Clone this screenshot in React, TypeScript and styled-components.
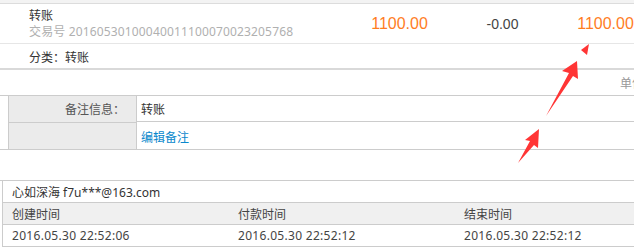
import React from "react";
import styled, { createGlobalStyle } from "styled-components";

const Global = createGlobalStyle`
  html, body { margin: 0; padding: 0; background: #fff; overflow: hidden; }
  body { font-family: "Noto Sans", "Noto Sans CJK SC", sans-serif; font-size: 12px; color: #333; }
`;

const Page = styled.div`
  position: relative;
  width: 680px;
  height: 248px;
`;

const TopBand = styled.div`
  height: 3px;
  background: #f3f3f3;
  border-bottom: 1px solid #dcdcdc;
`;

const ItemRow = styled.div`
  display: flex;
  align-items: center;
  height: 39px;
  border-bottom: 1px solid #e6e6e6;
`;

const ItemInfo = styled.div`
  flex: 1;
  padding-left: 29px;
  display: flex;
  flex-direction: column;
  align-self: flex-start;
  padding-top: 4px;
`;

const Title = styled.div`
  line-height: 16px;
  color: #333;
`;

const TradeNo = styled.div`
  line-height: 16px;
  color: #b0b0b0;
  letter-spacing: 0.15px;
`;

const Amount = styled.div<{ $orange?: boolean }>`
  width: 103px;
  text-align: center;
  font-family: "Liberation Sans", Arial, sans-serif;
  font-size: ${(p) => (p.$orange ? "16px" : "14px")};
  color: ${(p) => (p.$orange ? "#ff7d1f" : "#444")};
`;

const AmountEnd = styled.div`
  width: 23px;
`;

const CategoryRow = styled.div`
  height: 26px;
  display: flex;
  align-items: center;
  padding-left: 29px;
  padding-top: 2px;
  box-sizing: border-box;
  border-bottom: 2px solid #d9d9d9;
`;

const UnitRow = styled.div`
  height: 25px;
  display: flex;
  align-items: center;
  justify-content: flex-end;
  padding-right: 12px;
  color: #999;
  border-bottom: 1px solid #cccccc;
`;

const RemarkSection = styled.div`
  border-bottom: 1px solid #cccccc;
`;

const RemarkTable = styled.div`
  margin-left: 8px;
  border-left: 1px solid #cccccc;
  display: grid;
  grid-template-columns: 128px 1fr;
`;

const LabelCell = styled.div<{ $last?: boolean }>`
  height: 26px;
  background: #ebebeb;
  border-right: 1px solid #cccccc;
  border-bottom: ${(p) => (p.$last ? "none" : "1px solid #cccccc")};
  display: flex;
  align-items: center;
  justify-content: flex-end;
  padding-right: 11px;
  color: #555;
`;

const ValueCell = styled.div<{ $last?: boolean; $link?: boolean }>`
  height: 26px;
  border-bottom: ${(p) => (p.$last ? "none" : "1px solid #cccccc")};
  display: flex;
  align-items: center;
  padding-left: 4px;
  padding-top: 1px;
  box-sizing: border-box;
  color: ${(p) => (p.$link ? "#0a88cc" : "#333")};
`;

const Spacer = styled.div`
  height: 30px;
  border-bottom: 1px solid #cccccc;
`;

const BuyerBox = styled.div`
  margin-left: 2px;
  border-left: 1px solid #cccccc;
`;

const BuyerRow = styled.div`
  height: 21px;
  display: flex;
  align-items: center;
  padding-left: 9px;
  border-bottom: 1px solid #cccccc;
`;

const TimeGrid = styled.div<{ $head?: boolean }>`
  display: grid;
  grid-template-columns: 226px 226px 226px;
  height: 21px;
  background: ${(p) => (p.$head ? "#f0f0f0" : "#fff")};
  border-bottom: 1px solid #cccccc;
`;

const TimeCell = styled.div<{ $data?: boolean }>`
  display: flex;
  align-items: center;
  padding-left: 9px;
  color: #444;
  letter-spacing: ${(p) => (p.$data ? "0.3px" : "0")};
`;

const ArrowLayer = styled.svg`
  position: absolute;
  left: 0;
  top: 0;
  pointer-events: none;
`;

export default function App() {
  return (
    <>
      <Global />
      <Page>
        <TopBand />
        <ItemRow>
          <ItemInfo>
            <Title>转账</Title>
            <TradeNo>交易号 20160530100040011100070023205768</TradeNo>
          </ItemInfo>
          <Amount $orange>1100.00</Amount>
          <Amount>-0.00</Amount>
          <Amount $orange>1100.00</Amount>
          <AmountEnd />
        </ItemRow>
        <CategoryRow>分类：转账</CategoryRow>
        <UnitRow>单位：元</UnitRow>
        <RemarkSection>
          <RemarkTable>
            <LabelCell>备注信息：</LabelCell>
            <ValueCell>转账</ValueCell>
            <LabelCell $last />
            <ValueCell $last $link>编辑备注</ValueCell>
          </RemarkTable>
        </RemarkSection>
        <Spacer />
        <BuyerBox>
          <BuyerRow>心如深海 f7u***@163.com</BuyerRow>
          <TimeGrid $head>
            <TimeCell>创建时间</TimeCell>
            <TimeCell>付款时间</TimeCell>
            <TimeCell>结束时间</TimeCell>
          </TimeGrid>
          <TimeGrid>
            <TimeCell $data>2016.05.30 22:52:06</TimeCell>
            <TimeCell $data>2016.05.30 22:52:12</TimeCell>
            <TimeCell $data>2016.05.30 22:52:12</TimeCell>
          </TimeGrid>
        </BuyerBox>
        <ArrowLayer width="680" height="248" viewBox="0 0 680 248">
          <polygon points="589,44 581,50 587,55" fill="#ff3535" />
          <polygon points="577,61 562,71 569,73 546,116 573,76 578,79" fill="#ff3535" />
          <polygon points="539,129 525,140 530,141 518,163 534,145 538,148" fill="#ff3535" />
        </ArrowLayer>
      </Page>
    </>
  );
}
